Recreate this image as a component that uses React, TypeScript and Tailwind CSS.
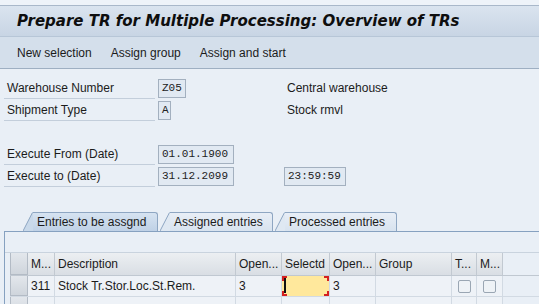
import React from 'react';

function Field({ label, value, w }: { label: string; value: string; w: string }) {
  return (
    <div className="flex h-[22px] items-center">
      <div className="flex h-full w-[151px] items-center border-b border-[#c3cedb] pl-[3px]">{label}</div>
      <div
        className={`ml-[3px] flex h-[19px] items-center border border-[#a3b0bf] bg-[#e1e9f2] pl-[3px] font-['Liberation_Mono',monospace] text-[11px] text-[#222] ${w}`}
      >
        {value}
      </div>
    </div>
  );
}

function Tab({ label, active, w }: { label: string; active?: boolean; w: string }) {
  const fill = active ? '#c9d9ea' : '#dfe8f2';
  return (
    <div className="flex h-[19px] items-stretch">
      <svg width="10" height="19" viewBox="0 0 10 19" className="block">
        <polygon points="0,19 9,1 10,0 10,19" fill={fill} />
        <line x1="0" y1="19" x2="9.5" y2="0.5" stroke="#8ea6c2" strokeWidth="1" />
      </svg>
      <div
        className={`flex items-center rounded-tr-[3px] border-t border-r border-[#8ea6c2] pl-[4px] ${w} ${
          active ? 'bg-linear-to-b from-[#d6e3f1] to-[#bfd1e6]' : 'bg-linear-to-b from-[#e8eef6] to-[#d8e3ef]'
        }`}
      >
        {label}
      </div>
    </div>
  );
}

const cols = [
  { label: 'M...', w: 'w-[27px]' },
  { label: 'Description', w: 'w-[181px]' },
  { label: 'Open...', w: 'w-[46px]' },
  { label: 'Selectd', w: 'w-[48px]' },
  { label: 'Open...', w: 'w-[46px]' },
  { label: 'Group', w: 'w-[76px]' },
  { label: 'T...', w: 'w-[25px]' },
  { label: 'M...', w: 'w-[26px]' },
];

function Check() {
  return <div className="h-[13px] w-[13px] rounded-[2px] border border-[#9aa6b3] bg-[#eef2f6]" />;
}

function Corner({ pos }: { pos: string }) {
  return <div className={`absolute h-[5px] w-[5px] border-[#d42020] ${pos}`} />;
}

export default function App() {
  return (
    <div className="h-[304px] w-[539px] overflow-hidden bg-[#e9eff6] font-['Liberation_Sans',Arial,sans-serif] text-[12px] text-[#1b1b1b]">
      <div className="h-[5px] bg-[#eef3f9]" />
      <div className="flex h-[31px] items-center border-t border-[#a9b8ca] bg-linear-to-b from-[#dae4ef] to-[#c8d5e4] pl-[17px] font-['DejaVu_Sans',sans-serif] text-[15px] font-bold italic text-[#0e0e0e]">
        Prepare TR for Multiple Processing: Overview of TRs
      </div>
      <div className="flex h-[33px] items-center gap-[19px] border-t border-b border-t-[#b7c6d7] border-b-[#9eafc2] bg-[#d4dfeb] pl-[17px]">
        <span>New selection</span>
        <span>Assign group</span>
        <span>Assign and start</span>
      </div>

      <div className="pt-[8px] pl-[4px]">
        <div className="flex">
          <Field label="Warehouse Number" value="Z05" w="w-[28px]" />
          <div className="ml-[101px] flex h-[22px] items-center">Central warehouse</div>
        </div>
        <div className="flex">
          <Field label="Shipment Type" value="A" w="w-[13px]" />
          <div className="ml-[116px] flex h-[22px] items-center">Stock rmvl</div>
        </div>
        <div className="h-[22px]" />
        <Field label="Execute From (Date)" value="01.01.1900" w="w-[76px]" />
        <div className="flex">
          <Field label="Execute to (Date)" value="31.12.2099" w="w-[76px]" />
          <div className="ml-[50px] flex h-[22px] items-center">
            <div className="flex h-[19px] w-[62px] items-center border border-[#a3b0bf] bg-[#e1e9f2] pl-[3px] font-['Liberation_Mono',monospace] text-[11px] text-[#222]">
              23:59:59
            </div>
          </div>
        </div>
      </div>

      <div className="mt-[25px] pl-[4px]">
        <div className="flex pl-[19px]">
          <Tab label="Entries to be assgnd" active w="w-[125px]" />
          <div className="ml-[2px]" />
          <Tab label="Assigned entries" w="w-[103px]" />
          <div className="ml-[2px]" />
          <Tab label="Processed entries" w="w-[112px]" />
        </div>
        <div className="border-t border-l border-[#86a1c0] pl-[5px]">
          <div className="-ml-[5px] h-[21px] border-b border-[#c9d3de]" />
          <div className="flex h-[23px] border-b border-[#c0c8d1]">
            <div className="w-[18px] border border-t-0 border-[#b3bbc5] bg-linear-to-b from-[#e3e7ec] to-[#cfd5dc]" />
            {cols.map((c, i) => (
              <div
                key={i}
                className={`flex items-center border-r border-[#c2c9d1] bg-linear-to-b from-[#eceff2] to-[#d9dee4] pl-[3px] ${c.w}`}
              >
                {c.label}
              </div>
            ))}
          </div>
          <div className="flex h-[21px] border-b border-[#d2dae3]">
            <div className="w-[18px] border-x border-b border-[#b3bbc5] bg-linear-to-b from-[#e3e7ec] to-[#cfd5dc]" />
            {cols.map((c, i) => {
              let content: React.ReactNode = null;
              if (i === 0) content = '311';
              if (i === 1) content = 'Stock Tr.Stor.Loc.St.Rem.';
              if (i === 2 || i === 4) content = '3';
              if (i === 6 || i === 7)
                return (
                  <div key={i} className={`flex items-center justify-center border-r border-[#d2dae3] bg-[#eef2f7] ${c.w}`}>
                    <Check />
                  </div>
                );
              if (i === 3)
                return (
                  <div key={i} className={`relative border-r border-[#d2dae3] bg-[#ffe89c] ${c.w}`}>
                    <div className="absolute top-[2px] left-[2px] h-[15px] w-[2px] bg-[#111]" />
                    <Corner pos="top-0 left-0 border-t-2 border-l-2" />
                    <Corner pos="top-0 right-0 border-t-2 border-r-2" />
                    <Corner pos="bottom-0 left-0 border-b-2 border-l-2" />
                    <Corner pos="bottom-0 right-0 border-b-2 border-r-2" />
                  </div>
                );
              return (
                <div key={i} className={`flex items-center border-r border-[#d2dae3] bg-[#eef2f7] pl-[3px] ${c.w}`}>
                  {content}
                </div>
              );
            })}
          </div>
          <div className="flex h-[21px]">
            <div className="w-[18px] border-x border-b border-[#b3bbc5] bg-linear-to-b from-[#e3e7ec] to-[#cfd5dc]" />
            {cols.map((c, i) => (
              <div key={i} className={`border-r border-[#d2dae3] bg-[#eef2f7] ${c.w}`} />
            ))}
          </div>
        </div>
      </div>
    </div>
  );
}
